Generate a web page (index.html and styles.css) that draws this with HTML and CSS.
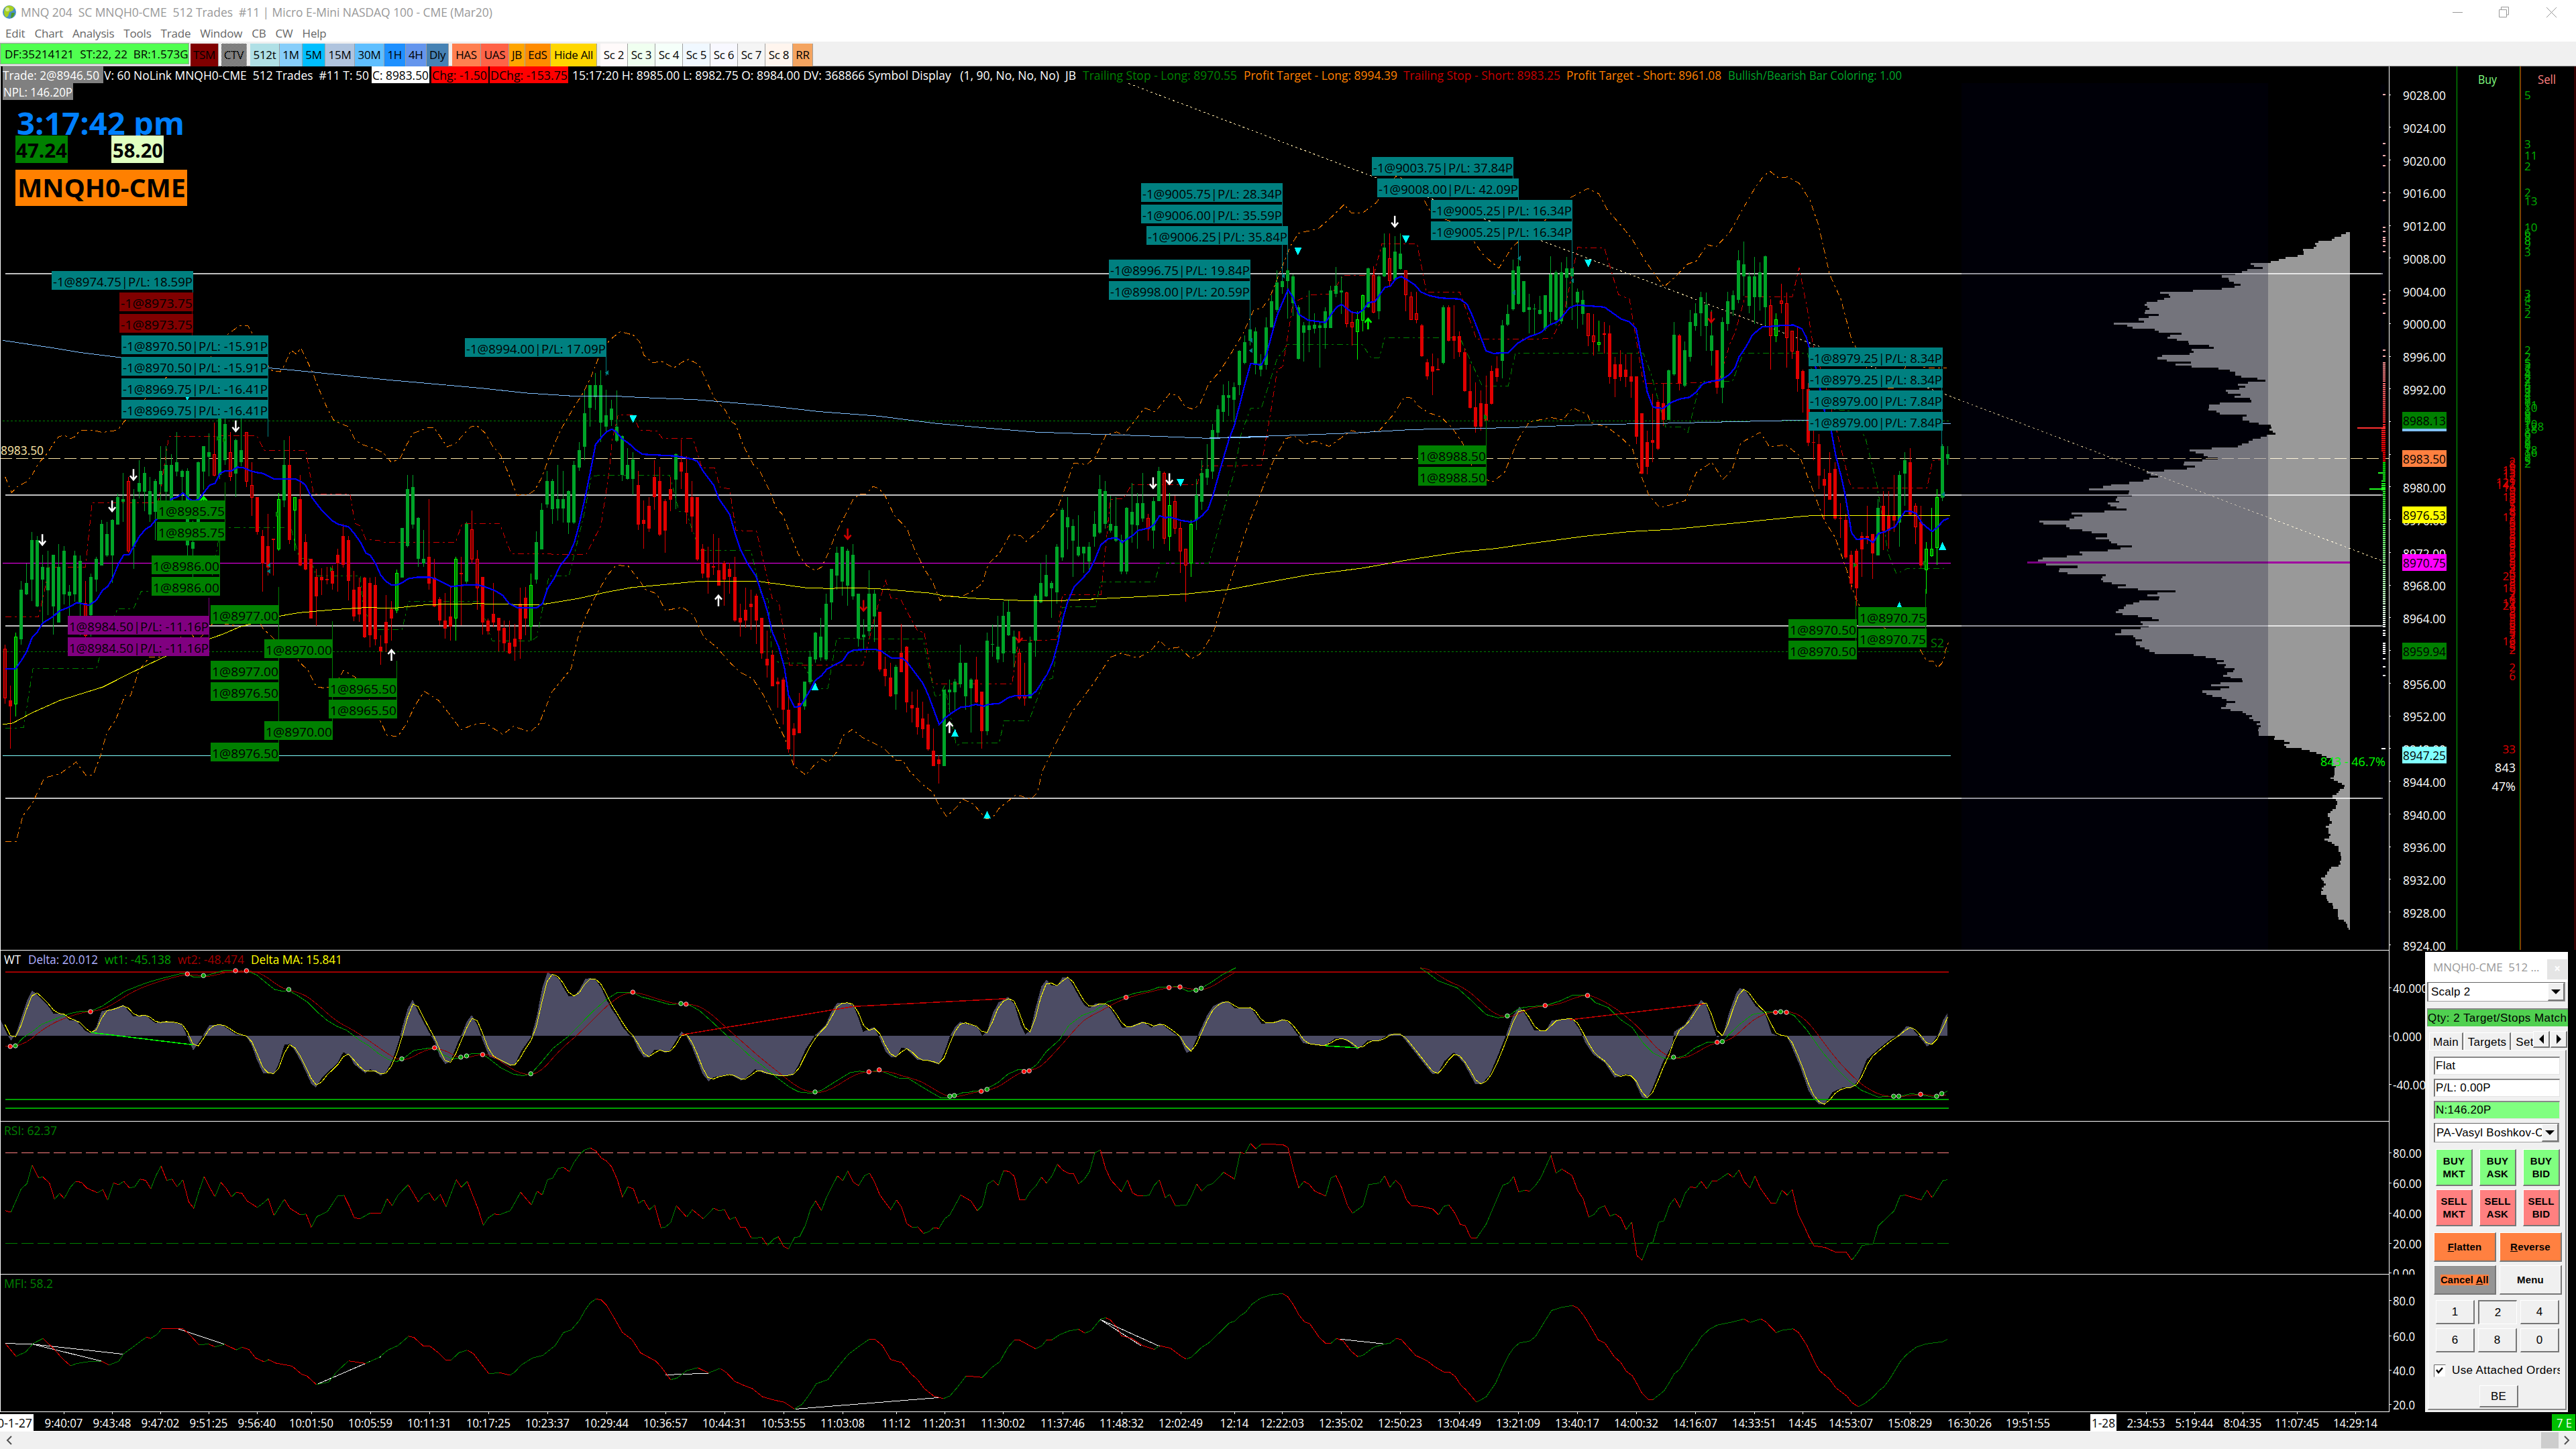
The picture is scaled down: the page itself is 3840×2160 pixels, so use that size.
FILE: index.html
```html
<!DOCTYPE html>
<html lang="en">
<head>
    <meta charset="UTF-8">
    <title>MNQ 204 SC MNQH0-CME 512 Trades #11</title>
    <link rel="stylesheet" href="styles.css">
</head>
<body>
    <div class="window">
        <div class="titlebar">
            <svg class="globe" width="22" height="24" viewBox="0 0 22 24">
                <circle cx="11" cy="12" r="10" fill="#4a90c8"/>
                <path d="M6 4c5-3 10-1 12 2l-2 4-5 2-2 6-3 2c-4-4-4-12 0-16z" fill="#a8d020"/>
                <path d="M14 13l5 0c-1 5-4 8-6 8z" fill="#4c9a28"/>
                <circle cx="8" cy="8" r="3" fill="#fff" opacity=".5"/>
            </svg>
            <span class="title">MNQ 204&nbsp; SC MNQH0-CME&nbsp; 512 Trades&nbsp; #11 | Micro E-Mini NASDAQ 100 - CME (Mar20)</span>
            <svg class="controls" width="160" height="24" viewBox="0 0 160 24" fill="none" stroke="#999">
                <path d="M3 12.500h15"/>
                <path d="M72.500 8.500h11v11h-11zM75.500 8v-3.500h11v11.500h-3"/>
                <path d="M143 5l15 15M158 5l-15 15"/>
            </svg>
        </div>
        <div class="menubar">
            <span>Edit</span><span>Chart</span><span>Analysis</span><span>Tools</span><span>Trade</span><span>Window</span><span>CB</span><span>CW</span><span>Help</span>
        </div>
        <div class="toolbar">
            <div class="status">DF:35214121&nbsp; ST:22, 22&nbsp; BR:1.573G</div>
            <div class="tool maroon w42">TSM</div>
            <div class="tool checker w38">CTV</div>
            <div class="group">
                <div class="tool powder w44">512t</div><div class="tool sky w34">1M</div><div class="tool deepsky w34">5M</div><div class="tool steel-light w44">15M</div><div class="tool sky2 w44">30M</div><div class="tool dodger w32">1H</div><div class="tool cornflower w32">4H</div><div class="tool steel w33">Dly</div>
            </div>
            <div class="group">
                <div class="tool coral w43">HAS</div><div class="tool tomato w42">UAS</div><div class="tool orange w24">JB</div><div class="tool dark-orange w38">EdS</div><div class="tool gold w69">Hide All</div>
            </div>
            <div class="group">
                <div class="tool snow w41">Sc 2</div><div class="tool honeydew w41">Sc 3</div><div class="tool mint w41">Sc 4</div><div class="tool alice w41">Sc 5</div><div class="tool ghost w41">Sc 6</div><div class="tool smoke w41">Sc 7</div><div class="tool shell w41">Sc 8</div><div class="tool sandy w30">RR</div>
            </div>
        </div>
        <svg id="chart" width="3840" height="2035" viewBox="0 99 3840 2035"></svg>
        <div class="scrollbar">
            <svg width="12" height="16" viewBox="0 0 12 16" fill="none" stroke="#505050" stroke-width="2"><path d="M9 2L3 8l6 6"/></svg>
            <div class="thumb"></div>
            <svg width="12" height="16" viewBox="0 0 12 16" fill="none" stroke="#505050" stroke-width="2"><path d="M3 2l6 6-6 6"/></svg>
        </div>
    </div>

    <div class="trade-window">
        <div class="tw-title"><span>MNQH0-CME&nbsp; 512 ...</span><b>×</b></div>
        <div class="combo"><span>Scalp 2</span><i></i></div>
        <div class="qty">Qty: 2 Target/Stops Match</div>
        <div class="tabs"><span class="tab">Main</span><span class="tab">Targets</span><span class="tab cut">Set</span><i class="spin left"></i><i class="spin right"></i></div>
        <div class="page">
            <div class="field">Flat</div>
            <div class="field">P/L: 0.00P</div>
            <div class="field profit">N:146.20P</div>
            <div class="combo account"><span>PA-Vasyl Boshkov-C</span><i></i></div>
            <div class="orders">
                <button class="buy">BUY<br>MKT</button><button class="buy">BUY<br>ASK</button><button class="buy">BUY<br>BID</button>
                <button class="sell">SELL<br>MKT</button><button class="sell">SELL<br>ASK</button><button class="sell">SELL<br>BID</button>
            </div>
            <div class="actions">
                <button class="hot"><u>F</u>latten</button><button class="hot"><u>R</u>everse</button>
                <button class="cancel"><span>Cancel <u>A</u>ll</span></button><button>Menu</button>
            </div>
            <div class="sizes">
                <button>1</button><button class="pressed">2</button><button>4</button>
                <button>6</button><button>8</button><button>0</button>
            </div>
            <div class="attach"><svg width="18" height="19" viewBox="0 0 18 19"><rect x="1" y="1" width="16" height="17" fill="#fff"/><path d="M.500 18.500V.500h17" fill="none" stroke="#666"/><path d="M4 8l3 4 6-7" fill="none" stroke="#000" stroke-width="2.500"/></svg><span>Use Attached Orders</span></div>
            <button class="be">BE</button>
        </div>
    </div>
    <script src="script.js"></script>
</body>
</html>
```
FILE: styles.css
```css
* {
    box-sizing: border-box;
}

body {
    margin: 0;
    width: 3840px;
    height: 2160px;
    overflow: hidden;
    background: #fff;
    font-family: "Open Sans", "Noto Sans", sans-serif;
    font-size: 17px;
    color: #000;
}

.window {
    display: flex;
    flex-direction: column;
    height: 2160px;
}

/* title bar and menu */
.titlebar {
    display: flex;
    align-items: center;
    height: 35px;
    padding: 0 27px 0 3px;
    color: #999;
}

.title {
    margin-left: 6px;
    font-size: 17.5px;
    letter-spacing: -0.06px;
    white-space: nowrap;
}

.controls {
    margin-left: auto;
}

.menubar {
    display: flex;
    align-items: center;
    gap: 14px;
    height: 27px;
    padding: 1px 0 0 8px;
    color: #666;
    font-size: 17px;
    letter-spacing: -0.2px;
}

.toolbar {
    display: flex;
    height: 37px;
    padding-top: 2px;
    background: #f0f0f0;
    border-bottom: 1px solid #a0a0a0;
    gap: 4px;
}

.status {
    width: 282px;
    height: 32px;
    padding-left: 6px;
    margin-right: -2px;
    border: 1px solid #a0a0a0;
    background: #50ff50;
    line-height: 32px;
    white-space: nowrap;
    overflow: hidden;
}

.group {
    display: flex;
    margin-left: 1px;
}

.tool {
    height: 34px;
    margin-top: 1px;
    border-right: 1px solid #a0a0a0;
    text-align: center;
    line-height: 34px;
    white-space: nowrap;
    overflow: hidden;
    letter-spacing: -0.3px;
}

.w24 { width: 24px; }
.w30 { width: 30px; }
.w32 { width: 31.5px; }
.w33 { width: 33px; }
.w34 { width: 34px; }
.w38 { width: 38px; }
.w41 { width: 41px; }
.w42 { width: 42px; }
.w43 { width: 43px; }
.w44 { width: 44px; }
.w69 { width: 69px; }

.maroon { background: #800000; }
.checker { background: repeating-conic-gradient(#000 0 25%, #fff 0 50%) 0 0 / 2px 2px; }
.powder { background: #b0e0e6; }
.sky { background: #87cefa; }
.deepsky { background: #00bfff; }
.steel-light { background: #b0c4de; }
.sky2 { background: #5fbfff; }
.dodger { background: #1e90ff; }
.cornflower { background: #6495ed; }
.steel { background: #4682b4; }
.coral { background: #ff7f50; }
.tomato { background: #ff6347; }
.orange { background: #ffa500; }
.dark-orange { background: #ff8c00; }
.gold { background: #ffd700; }
.snow { background: #fffafa; }
.honeydew { background: #f0fff0; }
.mint { background: #f5fffa; }
.alice { background: #f0f8ff; }
.ghost { background: #f8f8ff; }
.smoke { background: #f5f5f5; }
.shell { background: #fff5ee; }
.sandy { background: #f4a460; }

#chart {
    display: block;
    flex: none;
    background: #000;
    font-family: "Open Sans", "Noto Sans", sans-serif;
    shape-rendering: crispEdges;
}

.scrollbar {
    display: flex;
    align-items: center;
    height: 26px;
    padding: 0 8px;
    background: #f0f0f0;
}

.thumb {
    width: 26px;
    height: 24px;
    margin: 0 6px 0 auto;
    background: #cdcdcd;
}

/* floating trade window */
.trade-window {
    position: absolute;
    left: 3615px;
    top: 1419px;
    width: 213px;
    height: 686px;
    background: #f0f0f0;
    font-family: "Liberation Sans", Arial, sans-serif;
    font-size: 17px;
    letter-spacing: 0.25px;
    overflow: hidden;
}

.tw-title {
    display: flex;
    align-items: center;
    justify-content: space-between;
    height: 45px;
    padding: 0 1px 0 12px;
    background: #fff;
    color: #999;
    font-family: "Open Sans", sans-serif;
    font-size: 17px;
    letter-spacing: -0.1px;
    white-space: nowrap;
}

.tw-title b {
    width: 30px;
    height: 30px;
    margin-top: 6px;
    background: #e5e5e5;
    color: #fff;
    text-align: center;
    line-height: 28px;
}

.combo {
    display: flex;
    align-items: center;
    justify-content: space-between;
    width: 206px;
    height: 29px;
    margin-left: 3px;
    padding-left: 4px;
    background: #fff;
    border: 1px solid #a0a0a0;
    border-top-color: #666;
    border-left: 2px solid #777;
    white-space: nowrap;
}

.combo span {
    flex: 1;
    overflow: hidden;
}

.combo i {
    display: flex;
    flex: none;
    align-items: center;
    justify-content: center;
    width: 25px;
    height: 27px;
    background: #f0f0f0;
    border: 1px solid #fff;
    border-right: 2px solid #777;
    border-bottom: 2px solid #777;
}

.combo i::after {
    content: "";
    border: 7px solid transparent;
    border-top-color: #000;
    border-bottom: 0;
}

.qty {
    height: 27px;
    margin: 10px 0 0 3px;
    border-top: 2px solid #888;
    border-left: 1px solid #888;
    background: #50d050;
    line-height: 25px;
    white-space: nowrap;
    letter-spacing: 0.45px;
}

.tabs {
    display: flex;
    height: 26px;
    margin: 9px 0 0 6px;
    line-height: 27px;
}

.tab {
    border-top: 1px solid #fff;
    border-left: 1px solid #fff;
    border-right: 2px solid #777;
    padding: 0 5px;
    margin-right: 1px;
}

.cut {
    flex: 1;
    width: 0;
    border-right: 0;
    overflow: hidden;
    padding-right: 0;
}

.spin {
    display: flex;
    flex: none;
    align-items: center;
    justify-content: center;
    width: 25px;
    height: 25px;
    margin: -2px 1px 0 0;
    border: 1px solid #fff;
    border-right: 2px solid #777;
    border-bottom: 2px solid #777;
}

.left {
    margin-left: -1px;
}

.spin::after {
    content: "";
    border: 7px solid transparent;
}

.left::after {
    border-right: 7px solid #000;
    border-left: 0;
}

.right::after {
    border-left: 7px solid #000;
    border-right: 0;
}

.page {
    height: 537px;
    width: 207px;
    margin-left: 4px;
    padding: 9px 0 0 8px;
    border: 1px solid #fff;
    border-right: 2px solid #888;
    border-bottom: 2px solid #888;
}

.field {
    width: 188px;
    height: 27px;
    margin-bottom: 6px;
    padding-left: 1px;
    background: #fff;
    border: 1px solid #e3e3e3;
    border-top: 2px solid #888;
    border-left: 2px solid #777;
    line-height: 24px;
}

.profit {
    background: #80ff80;
}

.account {
    width: 187px;
    margin-left: 0;
    padding-left: 2px;
}

.page button {
    padding: 0;
    border: 1px solid #fff;
    border-right: 2px solid #777;
    border-bottom: 2px solid #777;
    background: #f0f0f0;
    font: bold 15px/19px "Liberation Sans", Arial, sans-serif;
    letter-spacing: 0.2px;
    color: #000;
}

.orders {
    display: grid;
    grid-template-columns: 55px 55px 55px;
    gap: 5px 10px;
    margin: 10px 0 0 3px;
}

.page .orders button {
    height: 55px;
}

.page .buy {
    background: #80ff80;
}

.page .sell {
    background: #ff8080;
}

.actions {
    display: grid;
    grid-template-columns: 93px 93px;
    gap: 5px;
    margin-top: 9px;
}

.page .actions button {
    height: 44px;
}

.page .hot {
    background: #ff8040;
}

.page .cancel {
    background: #959595;
}

.cancel span {
    background: #ff8040;
    font-size: 14.5px;
}

.sizes {
    display: grid;
    grid-template-columns: 58px 58px 58px;
    gap: 6px 5px;
    margin: 8px 0 0 3px;
}

.page .sizes button,
.page .be {
    height: 36px;
    font-weight: normal;
    font-size: 17px;
}

.page .sizes .pressed {
    border: 1px solid #fff;
    border-top: 2px solid #777;
    border-left: 2px solid #777;
}

.attach {
    display: flex;
    align-items: center;
    gap: 9px;
    width: 188px;
    height: 20px;
    margin-top: 17px;
    overflow: hidden;
    white-space: nowrap;
    letter-spacing: 0.4px;
}

.attach svg {
    flex: none;
}

.page .be {
    display: block;
    width: 58px;
    height: 33px;
    margin: 12px 0 0 68px;
}

/* chart drawing */
.ma { fill: none; stroke-width: 2.2; }
.thin { fill: none; stroke-width: 1; }
.dashdot { fill: none; stroke-width: 1; stroke-dasharray: 9 5 3 5; }
.profile { fill: #fff; fill-opacity: 0.6; }
.shade { fill: #000021; fill-opacity: 0.24; }
.delta { fill: #4c4c64; }
.dot { shape-rendering: auto; }
```
FILE: script.js
```js
// recorded segments: each one has an origin and a scale
const views = {
    a: [0, 380, 1.568, 2.0103],
    b: [960, 440, 1.568, 2.0103],
    c: [1600, 200, 1.2062, 1.9122],
    d: [2500, 500, 3, 3],
    e: [2900, 0, 1.6681, 2.24],
    f: [2900, 680, 1.6681, 2.1189],
    g: [0, 1400, 1.0453, 2.0632],
    h: [1450, 1400, 1.0453, 2.0632]
};

let out = '';
const X = (v, x) => views[v][0] + x / views[v][2];
const Y = (v, y) => views[v][1] + y / views[v][3];

function points(parts) {
    const list = [];
    for (const v in parts) {
        parts[v].trim().split(/\s+/).forEach(p => {
            const [x, y] = p.split(',').map(Number);
            list.push([X(v, x), Y(v, y)]);
        });
    }
    return list;
}

const str = pts => pts.map(p => p[0].toFixed(1) + ',' + p[1].toFixed(1)).join(' ');
const line = (pts, cls, color, width) => {
    out += `<polyline class="${cls}" points="${str(pts)}" stroke="${color}"${width ? ` style="stroke-width:${width}"` : ''} fill="none"/>`;
};
const hline = (y, x1, x2, color, width, dash) => {
    out += `<path d="M${x1} ${y}H${x2}" stroke="${color}" stroke-width="${width || 1}"${dash ? ` stroke-dasharray="${dash}"` : ''}/>`;
};
const rect = (x, y, w, h, fill, extra) => {
    out += `<rect x="${x}" y="${y}" width="${w}" height="${h}" fill="${fill}" ${extra || ''}/>`;
};
// x, vertical centre, text width
const text = (s, x, yc, w, color, size, extra) => {
    size = size || 18;
    out += `<text xml:space="preserve" x="${x}" y="${(yc + size * 0.34).toFixed(1)}" fill="${color}" font-size="${size}"${w ? ` textLength="${w}" lengthAdjust="spacingAndGlyphs"` : ''} ${extra || ''}>${s}</text>`;
};

// high, body top, body bottom, low, kind
const bars = [
['a', 0, `1168,1180,1327,1344,R 1290,1334,1352,1480,r 1132,1145,1345,1383,G 977,1003,1152,1167,g 925,983,1017,1019,g 830,854,972,1038,g 842,854,1053,1056,g 899,935,972,1103,g 886,937,1005,1080,g 898,899,1053,1138,g
866,935,1102,1102,g 873,887,1018,1048,g 989,1009,1022,1090,g 887,901,1018,1040,g 901,917,1042,1140,g 976,1045,1140,1145,R 954,965,1080,1144,g 905,911,972,1009,g 794,806,930,930,g 800,836,900,904,g
792,794,900,983,g 715,726,808,808,g 653,732,740,800,g 665,678,888,893,R 702,732,875,941,g 615,683,710,730,g 635,653,710,768,g 665,708,777,800,g 672,677,770,854,g 573,647,688,735,g
573,629,710,740,g 597,629,735,750,g 530,621,650,664,g 644,647,666,735,g 640,647,870,900,g 795,860,880,965,g 620,621,830,830,g 572,573,650,704,g 535,591,605,664,g 502,597,660,664,R
448,490,660,672,g 448,507,616,630,g 530,591,665,678,R 550,555,655,726,g 480,585,622,634,g 530,532,678,695,R 621,690,726,781,R 725,726,830,838,r 824,842,924,1009,r 776,873,936,960,r
850,851,855,960,r 714,732,881,887,G 555,629,735,755,g 543,629,855,866,r 725,726,765,887,G 660,732,930,932,r 836,860,942,944,r 911,911,1089,1089,r 940,965,1023,1112,r 938,964,975,1020,r
935,970,974,986,r 930,947,985,1003,r 880,899,924,1009,r 806,842,929,936,r 842,854,977,1035,r 946,1003,1083,1098,r 966,996,1077,1100,r 965,966,1145,1147,r 966,983,1139,1175,r 965,989,1152,1170,r
1139,1173,1188,1228,r 1020,1100,1163,1190,r 1038,1062,1090,1155,r 942,954,1064,1074,G 818,818,966,966,g 660,702,873,877,g 660,696,808,820,g 786,788,911,935,g 825,911,924,935,g 732,905,984,1003,r
911,966,1053,1056,r 1026,1032,1096,1110,r 1014,1096,1120,1150,r 990,1083,1114,1155,r 905,911,1088,1155,G 905,953,956,1110,r 801,806,978,984,g 765,824,911,924,R 884,911,998,1064,R 965,965,1102,1137,r
1090,1096,1127,1137,r 983,1075,1102,1116,r 1088,1088,1126,1188,r 1095,1118,1163,1188,r 1095,1161,1194,1196,r 1105,1149,1173,1216,r 997,1046,1151,1210,r 996,1027,1089,1140,r 954,990,1112,1155,G 828,860,973,985,g
743,764,882,882,g 647,677,748,758,g 671,677,762,806,g 629,732,760,795,g 647,732,760,802,g 705,708,802,836,g 617,629,802,806,g 561,585,637,648,g 405,474,575,615,g 390,390,459,515,g
353,390,426,465,g 345,390,502,560,g 404,481,515,530,g 435,461,495,512,g 405,514,557,560,g 540,543,660,678,g 579,629,672,674,g 590,614,672,720,g 648,690,808,824,r 736,794,806,880,r`],
['b', 120, `605,631,700,710,r 495,545,606,643,r 515,557,717,722,r 611,617,706,772,r 545,581,613,648,r 475,476,552,641,g 433,501,529,581,r 483,533,651,685,r 557,605,663,709,r 605,605,792,796,r
745,759,834,849,r 753,802,846,895,r 716,813,817,838,r 728,825,870,870,r 796,802,852,930,r 802,820,845,895,r 784,844,975,978,r 925,967,981,1023,r 876,943,975,997,r 883,925,934,1004,r
895,901,975,1046,r 966,967,1073,1090,r 1005,1090,1109,1145,r 1064,1077,1171,1172,r 1145,1158,1166,1236,r 1145,1152,1243,1286,r 1205,1242,1361,1371,r 1282,1299,1319,1408,r 1192,1223,1313,1313,r 1158,1158,1232,1242,g
1065,1084,1159,1165,g 1010,1011,1092,1102,g 967,1023,1086,1096,g 895,925,1092,1096,g 820,820,921,973,g 753,772,840,882,g 753,754,858,900,g 760,766,870,930,g 745,778,902,912,g 895,895,1030,1054,g
970,1017,1025,1062,g 825,895,1007,1022,g 883,895,963,1040,g 949,949,1122,1128,r 1084,1120,1141,1171,r 1102,1146,1201,1205,r 1108,1114,1196,1242,g 985,1071,1130,1130,r 1052,1053,1220,1250,r 1188,1229,1239,1281,r
1182,1236,1295,1316,r 1218,1268,1301,1326,r 1255,1287,1361,1365,r 1299,1365,1411,1411,r 1379,1391,1405,1463,r 1182,1182,1411,1411,g 1152,1182,1190,1250,g 1150,1158,1190,1243,g 1047,1102,1166,1176,g 1102,1102,1202,1242,g
1147,1152,1178,1310,g 1084,1152,1220,1222,r 1188,1188,1307,1358,r 1011,1035,1307,1318,g 986,1046,1048,1084,g 961,1053,1092,1102,g 919,961,1074,1100,g 913,949,1019,1021,g 1005,1023,1073,1115,g 1060,1072,1207,1212,R
1102,1202,1208,1230,R 1023,1041,1208,1208,g 895,901,1036,1084,g 803,862,920,922,g 778,838,903,905,g 856,862,878,967,g 745,754,891,924,g 638,643,786,795,g 605,666,695,762,g 672,692,735,844,g
660,754,780,783,g 754,754,774,832,g 740,754,797,824,g 647,685,724,754,g 538,581,712,715,g 557,587,685,700,g 600,685,706,712,g 605,692,735,740,g 717,734,829,837,g 636,637,828,837,g
563,649,688,742,g 592,623,689,760,g 533,623,669,680,g 655,668,700,735,R 605,617,706,760,g 515,527,618,618,g 528,534,729,745,R 592,631,723,766,G 600,618,699,716,R 680,699,767,832,R
760,760,808,919,R 674,686,803,844,G 551,599,673,704,g 495,533,619,643,g 446,521,546,568,g 386,404,528,550,g 330,342,412,429,g 268,300,350,380,g 257,300,307,361,g 262,275,314,380,g
165,166,270,300,g 121,140,204,207,g 70,103,136,150,g 96,109,208,238,g 176,205,222,243,g 66,96,208,224,g`],
['c', 236, `458,476,550,550,g 388,423,500,506,g 354,418,436,455,g 370,388,418,526,g 400,405,482,518,g 488,493,641,643,g 535,545,566,648,g 446,545,559,622,g 511,543,555,568,g 535,545,553,665,g
493,505,553,612,g 433,446,552,552,g 378,433,456,465,g 406,445,452,512,g 450,452,541,550,R 505,536,549,602,R 505,529,563,642,G 457,459,530,562,G 381,382,494,495,g 376,403,507,510,R
402,405,505,528,g 282,323,405,408,g 283,354,418,436,R 290,335,415,418,g 282,340,384,386,g 388,389,458,505,R 450,463,529,530,R 450,511,529,540,R 541,545,632,634,r 640,650,690,700,r
625,662,676,744,r 638,669,672,673,r 488,493,652,655,g 488,494,588,590,r 488,575,588,640,r 562,575,622,635,r 610,621,732,735,r 655,732,780,782,r 708,778,833,850,r 730,767,833,845,r
688,768,816,820,r 660,674,769,770,r 632,668,692,705,r 530,545,646,695,g 486,512,542,546,g 358,389,500,502,g 340,376,484,486,g 418,418,507,508,g 455,493,501,568,g 483,498,500,570,g
460,500,513,515,g 458,458,555,560,g 348,400,507,542,g 388,394,530,545,g 365,393,534,541,g 350,382,410,496,g 326,382,406,530,g 440,450,479,555,g 446,473,512,543,g 511,511,575,604,R
512,575,591,630,R 532,593,599,620,G 535,568,570,625,R 545,568,692,712,r 635,655,698,750,r 615,655,692,704,r 628,672,692,720,r 625,690,706,752,r 690,690,862,884,r 795,795,968,970,r
845,878,949,970,r 740,872,880,935,r 758,763,896,900,r 710,767,815,832,r 672,673,815,815,g 535,571,685,688,g 570,574,711,730,r 590,615,717,720,g 500,535,635,648,g 482,511,546,560,g
450,464,511,575,g 452,486,546,618,g 500,574,617,660,g 615,616,722,740,r 522,535,722,766,g 450,476,541,560,g 445,458,500,518,g 330,360,472,482,g 306,370,406,460,g 394,405,490,510,g
350,405,464,542,g 365,394,464,503,g 346,348,494,545,g 470,488,575,672,R 510,529,575,592,G 427,476,482,510,R 452,482,580,665,R 562,562,618,640,R 548,618,697,735,r 672,674,727,794,r`],
['d', 336, `213,240,480,495,r 426,477,479,558,r 440,486,627,687,r 597,642,672,825,r 522,615,735,735,r 567,597,819,825,r 750,816,818,906,r 798,825,993,998,r 963,981,1110,1137,r 954,963,1131,1209,r
879,897,957,1080,r 762,897,906,933,r 888,888,975,1089,r 732,771,984,984,g 696,762,873,960,r 696,807,873,954,r 624,807,828,879,r 606,624,837,945,g 522,558,618,762,g 504,567,801,807,r
750,762,855,933,R 762,834,1029,1041,r 924,954,1047,1155,G 771,954,984,990,G 687,723,948,1026,G 486,495,726,741,g 495,531,552,579,g`]
];

const kinds = {
    g: ['#00a428', '#00a428'],
    r: ['#e00000', '#e00000'],
    G: ['#008000', '#00ff00'],
    R: ['#800000', '#ff0000']
};

// ---- price levels
[408, 738, 933, 1190].forEach(y => hline(y, 8, 3552, '#c0c0c0', 2));
hline(627.5, 4, 2905, '#008000', 1, '3 3');
hline(971.5, 4, 2905, '#008000', 1, '3 3');
hline(683.5, 0, 3561, '#ffe8a8', 1, '18 6');
hline(839.5, 4, 2908, '#ff00ff');
hline(1126.5, 4, 2908, '#80ffff');
out += '<path d="M1682.500 124.500L3551 836" stroke="#ffe8a8" stroke-dasharray="3 4"/>';

// ---- volatility bands
line(points({
    a: '12,665 27,712 40,695 62,680 75,660 90,625 100,610 112,593 125,565 137,545 150,540 165,550 175,545 187,525 215,525 240,532 275,525 290,500 340,430 390,365 440,330 490,310 530,240 560,212 580,213 590,235 605,255 620,310 632,345 655,350 665,330 680,285 693,298 703,278 715,310 730,350 745,400 765,460 780,495 795,505 815,515 830,555 850,570 870,578 895,592 915,622 935,610 950,570 965,535 1000,518 1015,518 1045,575 1065,565 1080,543 1100,515 1115,512 1135,535 1150,570 1170,600 1190,660 1208,720 1235,718 1250,705 1265,670 1290,585 1310,525 1340,460 1360,420 1380,370 1400,305 1425,255 1450,230 1480,240 1495,260 1505,300',
    b: '20,203 40,198 70,218 90,200 105,192 128,208 145,255 165,310 190,345 205,380 215,388 230,445 255,507 270,525 295,590 308,635 325,660 340,710 360,775 380,810 400,825 415,815 430,775 450,710 470,660 490,610 505,597 520,595 535,573 550,580 565,605 585,660 615,700 630,755 655,820 675,860 692,915 705,900 740,905 770,885 790,865 805,805 830,775 855,718 880,720 893,738 930,700 950,665 965,645 985,575 1005,503 1035,508 1055,485 1080,418 1105,410 1120,420 1145,380 1170,338 1195,350 1210,325 1230,293 1250,305 1265,335 1285,342 1300,325 1320,265 1345,230 1370,180 1400,115 1425,45 1445,38',
    c: '352,470 370,400 390,320 405,282 440,270 465,235 487,200 500,225 520,225 545,195 560,160 580,120 600,130 625,170 645,230 700,260 720,305 735,340 750,362 765,382 790,320 860,230 895,180 925,155 945,170 960,215 990,270 1005,300 1030,365 1062,435 1080,410 1105,370 1120,362 1140,315 1155,322 1180,280 1205,210 1225,155 1240,122 1252,105 1268,125 1285,122 1305,140 1325,190 1340,260 1360,400 1380,470 1400,590 1420,640 1440,720 1480,725 1500,650 1530,665 1570,667'
}), 'dashdot', '#ff8000');
line(points({
    a: '110,1565 140,1555 178,1520 200,1558 218,1558 235,1500 250,1430 270,1395 292,1320 305,1322 325,1245 350,1205 380,1205 440,1120 460,1160 500,1100 545,1110 585,1048 615,1120 640,1150 665,1158 700,1220 720,1245 740,1295 762,1298 785,1285 803,1245 830,1265 860,1325 890,1400 905,1440 930,1443 950,1405 970,1350 992,1308 1025,1335 1050,1375 1078,1423 1105,1408 1135,1403 1175,1437 1200,1413 1240,1430 1260,1405 1290,1310 1335,1240 1350,1150 1370,1080 1395,1015 1420,960 1440,930 1468,932 1500,985',
    b: '0,880 30,895 50,945 90,935 115,958 140,1025 170,1055 200,1100 225,1130 255,1150 280,1200 305,1265 330,1330 350,1410 378,1438 400,1405 415,1390 430,1400 450,1370 465,1320 487,1301 510,1325 560,1357 590,1395 605,1395 620,1425 650,1465 675,1490 690,1530 707,1562 730,1535 745,1510 770,1525 800,1570 815,1565 830,1538 870,1497 905,1510 920,1490 930,1430 960,1350 1000,1250 1050,1165 1090,1085 1115,1073 1155,1087 1185,1065 1205,1035 1225,1060 1250,1055 1280,1090 1300,1075 1330,1015 1350,930 1375,840 1400,730 1430,630 1470,500 1500,430 1520,422 1545,447',
    c: '434,875 460,890 500,845 520,852 550,845 575,800 595,750 610,752 620,775 640,795 660,805 680,835 700,880 720,960 740,985 755,990 775,965 800,870 820,820 860,808 880,815 898,780 925,800 930,822 960,835 985,865 1005,895 1020,970 1035,1030 1055,1065 1100,1045 1120,965 1148,935 1168,985 1185,955 1200,880 1235,850 1252,892 1280,885 1305,915 1325,995 1350,1100 1370,1150 1390,1240',
    d: '800,1180 820,1215 930,1310 1060,1360 1090,1410 1115,1455 1145,1457 1165,1487 1185,1465 1195,1440 1200,1410 1214,1370'
}), 'dashdot', '#ff8000');
line([[8, 1254], [24, 1255], [34, 1216], [48, 1198], [66, 1160]], 'dashdot', '#ff8000');

// ---- trailing stops
line(points({
    a: '12,1085 90,1085 105,1000 115,935 200,936 215,743 370,743 395,544 600,542 618,586 715,586 733,717 818,717 830,805 842,812 855,853 885,855 895,861 1065,861 1080,806 1168,806 1195,895 1370,898 1405,810 1425,640 1430,560 1445,478 1480,480 1495,525',
    b: '30,407 43,429 115,430 135,517 165,518 178,577 200,580 215,705 263,707 285,830 300,910 315,920 340,1108 512,1108 540,960 565,855 577,908 600,912 640,1008 655,1010 675,1165 860,1166 875,1034 965,1033 978,898 1068,897 1090,612 1120,610 1140,568 1293,567 1305,512 1443,510 1465,350 1480,225 1493,213 1510,80',
    c: '395,480 425,458 465,455 485,402 540,402 555,312 618,312 635,450 695,450 725,585 860,583 880,525 907,323 955,325 980,457 1000,470 1025,710 1160,709 1180,600 1190,565 1208,463 1293,463 1305,380 1320,500 1330,600 1350,700 1395,990 1400,1008 1535,1008 1545,930 1565,928'
}), 'dashdot', '#d00000');
line(points({
    a: '12,1418 55,1417 77,1240 225,1240 245,1150 275,1060 312,1060 330,1008 490,1008 510,860 525,817 680,817 700,910 725,911 740,962 842,962 850,1060 875,1123 940,1122 955,1038 1120,1038 1150,1156 1240,1158 1255,1145 1283,962 1330,962 1365,780 1382,665 1400,660 1500,660',
    b: '60,540 82,648 98,648 130,765 250,765 275,905 290,910 300,1095 325,1103 370,1103 405,1180 430,1178 450,1029 652,1030 680,1200 690,1203 703,1170 730,1350 745,1342 830,1342 842,1275 900,1275 935,1155 955,1148 978,935 1055,934 1068,860 1193,860 1207,803 1320,803 1380,530 1395,420 1418,338 1443,338 1480,190 1505,150',
    c: '385,600 520,600 535,637 550,637 560,580 695,580 735,717 782,717 795,624 1025,624 1040,690 1065,835 1095,835 1105,850 1125,720 1135,705 1185,705 1205,624 1320,624 1345,780 1400,790 1425,870 1445,1000 1465,1195 1480,1253 1500,1238 1565,1238'
}), 'dashdot', '#008000');

// ---- candles
bars.forEach(([v, start, data]) => {
    data.trim().split(/\s+/).forEach((row, n) => {
        const f = row.split(',');
        const [h, t, b, l] = f.slice(0, 4).map(y => Y(v, +y));
        const [fill, edge] = kinds[f[4]];
        const x = 7.5 + (start + n) * 8;
        out += `<path d="M${x} ${h.toFixed(1)}V${l.toFixed(1)}" stroke="${edge}"/>`;
        const bh = Math.max(1, b - t);
        if (fill === edge) {
            rect(x - 2.5, t.toFixed(1), 5, bh.toFixed(1), fill);
        } else {
            rect(x - 2, t.toFixed(1), 4, bh.toFixed(1), fill, `stroke="${edge}"`);
        }
    });
});

// ---- moving averages
line(points({
    a: '6,256 120,278 190,293 285,308 450,322 630,339 690,346 775,357 910,375 1000,385 1130,400 1230,414 1340,423 1450,424',
    b: '0,307 120,313 280,330 410,349 545,362 680,384 800,398 910,410 1040,416 1200,423 1320,429 1460,425',
    c: '245,866 400,858 500,852 610,842 780,837 950,827 1050,825 1200,819 1320,815',
    d: '800,385 1000,390 1224,394'
}), 'thin', '#80c0ff');
line(points({
    a: '6,1407 30,1403 75,1372 140,1335 240,1295 310,1250 380,1207 490,1150 520,1137 560,1115 650,1083 700,1072 780,1063 850,1057 925,1058 1000,1048 1120,1045 1180,1047 1260,1049 1350,1030 1420,1010 1480,996',
    b: '0,873 130,857 270,858 380,877 430,879 500,877 560,881 670,893 700,901 780,909 880,915 980,915 1070,909',
    c: '0,1328 140,1317 200,1311 280,1298 340,1280 420,1257 520,1237 600,1214 700,1190 760,1181 820,1167 920,1146 1000,1133 1080,1126 1200,1107 1300,1091 1330,1087 1577,1088'
}), 'thin', '#ffff00');
line(points({
    a: '12,1240 37,1240 50,1215 62,1190 75,1147 87,1130 100,1103 125,1083 137,1068 162,1055 180,1042 208,1050 225,1035 240,1005 252,993 263,970 277,925 290,898 302,898 325,845 340,822 352,813 363,795 375,785 400,732 415,725 428,713 440,730 452,737 465,733 478,710 490,690 502,685 514,655 525,648 540,648 555,636 570,638 585,647 600,652 615,655 640,671 690,671 705,680 715,692 728,725 750,762 775,795 790,807 805,812 815,815 830,838 842,860 855,893 865,900 878,925 890,960 902,978 915,989 928,989 940,982 955,970 975,966 1005,966 1020,972 1040,985 1055,994 1080,990 1115,988 1130,993 1155,1005 1175,1020 1190,1045 1210,1058 1255,1057 1268,1045 1280,1000 1295,970 1310,930 1330,898 1343,860 1355,800 1368,725 1380,650 1392,568 1405,548 1418,530 1430,522 1440,530 1453,550 1470,565 1485,583 1500,596',
    b: '0,477 75,482 112,491 125,498 137,525 163,570 175,610 200,657 212,710 225,760 240,800 262,843 275,892 288,945 300,1010 315,1055 328,1115 338,1200 352,1235 365,1232 375,1213 390,1180 400,1155 415,1140 428,1120 440,1112 465,1095 477,1072 490,1063 540,1061 555,1067 578,1087 603,1087 615,1100 628,1122 640,1143 652,1163 665,1200 678,1245 690,1287 703,1268 715,1256 728,1245 740,1235 760,1232 775,1226 795,1232 805,1226 830,1224 852,1206 865,1201 905,1199 917,1186 930,1160 942,1137 955,1100 968,1040 980,965 990,920 1005,875 1020,855 1040,828 1053,795 1068,748 1085,730 1105,727 1118,741 1130,730 1142,720 1155,705 1180,698 1192,688 1205,661 1218,667 1230,665 1255,675 1280,680 1292,673 1305,660 1318,642 1330,600 1343,540 1355,485 1368,430 1380,390 1393,325 1405,265 1418,205 1443,209 1455,178 1468,115 1480,60 1493,20',
    c: '386,443 395,465 405,513 422,530 453,537 463,515 473,494 482,485 500,507 512,511 522,500 530,480 542,478 550,460 560,437 570,433 580,412 590,406 602,417 615,431 625,450 640,460 660,467 695,470 708,485 718,520 730,568 742,618 755,625 782,623 800,595 820,577 840,566 855,545 870,535 882,515 892,495 905,487 940,491 955,493 970,510 985,527 1000,535 1012,555 1022,640 1032,735 1042,778 1060,782 1075,765 1090,755 1108,750 1120,735 1132,712 1145,705 1165,700 1180,685 1190,665 1197,635 1210,605 1220,575 1230,560 1240,548 1255,548 1275,545 1295,544 1310,555 1318,580',
    d: '590,50 620,145 640,240 660,340 690,430 710,540 735,635 750,705 765,790 780,883 802,912 850,908 877,927 900,886 930,878 950,866 975,856 1000,815 1020,787 1045,787 1070,797 1095,840 1140,877 1165,858 1190,828 1214,818'
}), 'ma', '#0000ff');

// ---- signals
function arrow(v, x, y, dir, color) {
    const cx = X(v, x), cy = Y(v, y), d = dir;
    out += `<path class="dot" d="M${cx} ${cy - 8 * d}V${cy + 7 * d}M${cx - 5} ${cy + 2 * d}L${cx} ${cy + 8 * d}L${cx + 5} ${cy + 2 * d}" fill="none" stroke="${color}" stroke-width="2.500"/>`;
}
function tri(v, x, y, dir) {
    const cx = X(v, x), cy = Y(v, y);
    out += `<path d="M${cx - 5.5} ${cy - 5.5 * dir}h11L${cx} ${cy + 6 * dir}z" fill="#00ffff"/>`;
}
[['a', 99, 853], ['a', 262, 752], ['a', 312, 658], ['a', 551, 512], ['b', 1190, 562], ['b', 1228, 550], ['c', 578, 248]].forEach(p => arrow(...p, 1, '#fff'));
[['a', 915, 1200], ['b', 174, 916], ['b', 714, 1296]].forEach(p => arrow(...p, -1, '#fff'));
[['b', 476, 715], ['b', 513, 930], ['b', 877, 1023], ['c', 1147, 521]].forEach(p => arrow(...p, 1, '#d00000'));
[['c', 530, 541], ['a', 476, 741]].forEach(p => arrow(...p, -1, '#00ff00'));
[['a', 438, 425], ['a', 1480, 492], ['b', 1254, 562], ['c', 404, 334], ['c', 598, 300], ['c', 926, 368]].forEach(p => tri(...p, 1));
[['b', 400, 1173], ['b', 727, 1312], ['b', 802, 1557], ['d', 1187, 942], ['d', 994, 1209]].forEach(p => tri(...p, -1));
// fill markers
[['a', 1419, 353], ['a', 629, 930], ['a', 629, 948], ['a', 453, 824], ['b', 1419, 135], ['b', 1419, 166], ['c', 378, 405], ['c', 802, 354], ['c', 898, 418], ['c', 792, 452], ['d', 1190, 711]].forEach(([v, x, y]) => {
    out += `<path d="M${X(v, x) - 3} ${Y(v, y)}l5 -4v8z" fill="#008080"/>`;
});
[['a', 509, 550], ['a', 523, 555], ['a', 648, 777], ['a', 774, 942], ['c', 741, 806], ['d', 795, 1027], ['d', 1107, 1019]].forEach(([v, x, y]) => {
    out += `<path d="M${X(v, x) + 3} ${Y(v, y)}l-5 -4v8z" fill="#008000"/>`;
});

// ---- leader lines from a fill label to its bar
[[287, 404, 460, '#008080'], [286.5, 464, 524, '#800000'], [399, 500, 651, '#008080'], [903, 504, 560, '#008080'], [335, 719, 800, '#008000'], [327, 800, 880, '#008000'], [415, 875, 1110, '#008000'], [495, 926, 1080, '#008000'], [591, 985, 1050, '#008000'], [311, 891, 950, '#800080'],
 [1911, 290, 418, '#008080'], [1919, 337, 400, '#008080'], [1863, 400, 505, '#008080'], [2255, 240, 270, '#008080'], [2263, 270, 385, '#008080'], [2343, 300, 420, '#008080'], [2215, 620, 700, '#008000'], [2766, 896, 960, '#008000'], [2870.5, 878, 940, '#008000'], [2894.5, 518, 670, '#008080']
].forEach(([x, y1, y2, c]) => { out += `<path d="M${x} ${y1}V${y2}" stroke="${c}"/>`; });

// ---- fill labels
const T = '#008080', GR = '#008000', M = '#800000', P = '#800080';
[['-1@8974.75|P/L: 18.59P', 77, 404, 211, T], ['-1@8973.75', 178, 436, 110, M], ['-1@8973.75', 178, 468, 110, M],
 ['-1@8970.50|P/L: -15.91P', 181, 500, 219, T], ['-1@8970.50|P/L: -15.91P', 181, 532, 219, T], ['-1@8969.75|P/L: -16.41P', 181, 564, 219, T], ['-1@8969.75|P/L: -16.41P', 181, 596, 219, T],
 ['-1@8994.00|P/L: 17.09P', 693, 504, 211, T],
 ['1@8985.75', 234, 746, 102, GR], ['1@8985.75', 234, 778, 102, GR], ['1@8986.00', 226, 828, 102, GR], ['1@8986.00', 226, 860, 102, GR],
 ['1@8977.00', 314, 902, 102, GR], ['1@8977.00', 314, 985, 102, GR], ['1@8976.50', 314, 1017, 102, GR], ['1@8976.50', 314, 1107, 102, GR],
 ['1@8970.00', 394, 953, 102, GR], ['1@8970.00', 394, 1075, 102, GR], ['1@8965.50', 490, 1011, 102, GR], ['1@8965.50', 490, 1043, 102, GR],
 ['1@8984.50|P/L: -11.16P', 101, 918, 211, P], ['1@8984.50|P/L: -11.16P', 101, 950, 211, P],
 ['-1@9005.75|P/L: 28.34P', 1701, 273, 211, T], ['-1@9006.00|P/L: 35.59P', 1701, 305, 211, T], ['-1@9006.25|P/L: 35.84P', 1709, 337, 211, T],
 ['-1@8996.75|P/L: 19.84P', 1653, 387, 211, T], ['-1@8998.00|P/L: 20.59P', 1653, 419, 211, T],
 ['-1@9003.75|P/L: 37.84P', 2045, 234, 211, T], ['-1@9008.00|P/L: 42.09P', 2053, 266, 211, T], ['-1@9005.25|P/L: 16.34P', 2133, 298, 211, T], ['-1@9005.25|P/L: 16.34P', 2133, 330, 211, T],
 ['1@8988.50', 2114, 664, 102, GR], ['1@8988.50', 2114, 696, 102, GR],
 ['-1@8979.25|P/L: 8.34P', 2696, 518, 200, T], ['-1@8979.25|P/L: 8.34P', 2696, 550, 200, T], ['-1@8979.00|P/L: 7.84P', 2696, 582, 200, T], ['-1@8979.00|P/L: 7.84P', 2696, 614, 200, T],
 ['1@8970.50', 2666, 923, 102, GR], ['1@8970.50', 2666, 955, 102, GR], ['1@8970.75', 2770, 905, 102, GR], ['1@8970.75', 2770, 937, 102, GR]
].forEach(([s, x, y, w, c]) => {
    rect(x, y, w, 28, c);
    text(s, x + 2, y + 16, w - 3, '#000', 19);
});
text('S2', 2878, 959, 20, '#008000');
text('8983.50', 1, 671.5, 64, '#ffe8a8');

// ---- volume profile, "row top:left edge"
const profile = {
    e: '775:996 782:984 790:967 797:961 804:927 811:919 817:923 824:916 831:889 838:891 851:876 858:846 865:829 871:809 878:759 885:767 892:789 898:751 905:737 912:721 919:687 927:704 934:706 941:717 948:734 954:719 961:687 968:616 974:534 981:555 988:559 995:544 1001:527 1008:500 1015:495 1021:502 1028:507 1035:497 1042:495 1048:530 1055:505 1062:480 1070:494 1077:419 1084:452 1091:465 1098:520 1104:530 1111:587 1118:558 1124:552 1131:575 1138:604 1145:606 1151:656 1158:667 1165:612 1172:617 1178:607 1185:539 1192:527 1200:550 1207:611 1214:572 1221:612 1228:679 1234:707 1241:721 1254:736 1261:776 1268:796 1275:752 1281:727 1288:746 1295:731 1301:697 1308:702 1315:734 1322:719 1328:757 1335:761 1344:682 1351:656 1364:654 1371:674 1378:682 1384:749 1391:739 1404:755 1411:779 1418:809 1425:811 1432:806 1438:814 1445:821 1452:799 1459:784 1465:764 1472:754 1480:737 1487:727 1494:662 1501:607 1508:622 1514:642',
    f: '0:652 5:677 11:639 17:594 23:592 30:621 36:600 42:544 48:500 55:510 61:529 67:507 74:492 81:457 88:412 94:392 101:357 108:457 115:455 121:464 127:427 134:424 141:432 147:404 153:410 159:425 165:450 172:395 178:314 185:340 191:320 197:309 203:234 210:244 216:300 225:309 231:340 238:364 244:402 256:374 262:407 268:412 275:427 282:464 289:435 295:404 301:334 307:340 313:302 320:242 326:230 339:250 345:329 353:284 361:282 367:304 373:399 379:390 386:387 392:392 398:414 404:449 410:429 417:479 424:572 430:527 436:502 443:532 450:530 456:482 462:467 468:449 475:444 482:430 489:424 496:440 502:479 508:514 515:530 521:485 528:490 534:505 540:485 546:437 559:422 566:467 572:472 579:489 585:474 597:484 604:495 611:507 618:520 625:617 631:647 638:672 645:692 651:676 657:697 663:694 670:719 676:716 683:701 690:691 696:709 701:737 708:739 714:684 720:661 727:706 733:684 740:639 747:649 754:664 761:687 767:699 773:721 780:699 786:697 792:686 799:709 805:739 811:747 818:762 824:756 830:766 837:782 843:774 850:784 856:779 862:777 869:779 884:819 890:817 896:842 903:856 909:842 915:847 922:886 928:906 934:922 941:936 947:947 953:962 965:960 978:970 984:968 1008:965 1015:957 1019:966 1025:976 1031:985 1038:993 1045:990 1051:981 1058:978 1064:972 1070:963 1083:970 1089:974 1102:971 1115:962 1121:957 1128:951 1140:955 1152:960 1160:954 1168:946 1174:952 1193:957 1200:954 1207:942 1213:951 1218:960 1224:967 1231:977 1249:982 1262:984 1278:980 1284:983 1290:977 1297:959 1303:954 1311:949 1323:944 1330:934 1336:938 1342:940 1350:946 1355:940 1362:936 1368:939 1374:934 1385:947 1398:949 1405:952 1412:962 1419:964 1431:975 1456:977 1463:991 1470:995 1476:999 1489:1002 1496:1005'
};
let d = `M3503 ${Y('e', 775).toFixed(1)}`;
for (const v in profile) {
    profile[v].split(' ').forEach(p => {
        const [y, x] = p.split(':').map(Number);
        d += `V${Y(v, y).toFixed(1)}H${X(v, x).toFixed(1)}`;
    });
}
out += `<path class="profile" d="${d}H3503z"/>`;
rect(3022, 837, 481, 3, '#a000a0');
out += '<rect class="shade" x="2924" y="124" width="456.500" height="1292"/>';
out += '<rect class="shade" x="3549" y="126" width="6" height="1290"/>';
text('843 - 46.7%', 3459, 1136, 97, '#00ff00');

// ---- depth history strip
const mark = (y, w, c) => rect(3556 - w, y.toFixed(1), w, 2, c);
[316, 479, 519, 553, 642, 669, 759, 772, 793, 799, 806, 820, 839, 983, 998, 1012, 1046, 1169, 1189].forEach(y => mark(y / 2.24 - 1, 4, '#ffb0b0'));
for (let y = 540; y < 687; y += 3.05) {
    const k = Math.max(0, Math.round(150 - (y - 540) * 1.2));
    mark(y, y > 636 && y < 672 ? 6 : 4, `rgb(255,${k},${k})`);
}
mark(637, 42, '#ff3030');
for (let y = 689; y < 934; y += 3.05) {
    const k = Math.max(0, Math.round((y - 689) * 1));
    mark(y, y > 714 && y < 730 ? 6 : 4, `rgb(${k},255,${k})`);
}
mark(704, 11, '#20ff20');
mark(728, 24, '#20ff20');
[939, 943, 946, 958, 961, 964, 967, 970, 973, 981, 993, 1006].forEach(y => mark(y, 4, '#fff'));
mark(1115, 6, '#fff');

// ---- price axis
out += '<path d="M3561.500 99V2104" stroke="#fff"/>';
for (let p = 9028; p >= 8924; p -= 4) {
    const y = 143 + (9028 - p) * 12.186;
    hline((y - 2).toFixed(1), 3561, 3564, '#fff');
    text(p + '.00', 3582, y, 64, '#fff', 18);
}
rect(3566, 1417, 200, 16, '#000');
[['8988.13', 614, '#008000'], ['8983.50', 671, '#ff8040'], ['8976.53', 755, '#ffff00'], ['8970.75', 826, '#ff00ff'], ['8959.94', 958, '#008000'], ['8947.25', 1113, '#80ffff']].forEach(([s, y, c]) => {
    rect(3581, y, 66, 25, c);
    text(s, 3582, y + 14, 64, '#000', 18);
});
rect(3581, 639, 66, 4, '#80c0ff');

// ---- buy / sell columns
text('Buy', 3694, 119, 28, '#80ff80');
text('Sell', 3783, 119, 27, '#ff8080');
[[3662.5, '#00b000'], [3756.5, '#00b000'], [3757.5, '#c00000'], [3838.5, '#800000']].forEach(([x, c]) => {
    out += `<path d="M${x} 99V1416" stroke="${c}"/>`;
});
const digit = (s, y, c) => text(s, c === '#00b000' ? 3763 : 3750, y, 0, c, 17, c === '#00b000' ? '' : 'text-anchor="end"');
[['5', 142], ['3', 215], ['11', 232], ['2', 248], ['2', 287], ['13', 300], ['10', 339], ['6', 347], ['8', 353], ['8', 359], ['9', 364], ['3', 376], ['3', 438], ['4', 445], ['5', 455], ['2', 468], ['2', 522], ['2', 532]].forEach(p => digit(...p, '#00b000'));
'5 3 7 5 4 8 2 7 4 6 3 9 4 8 5 6 11 10 8 6 8 3 9 10 128 18 8 6 9 5 6 8 9 18 16 9 6 5 2'.split(' ').forEach((s, n) => digit(s, 541 + n * 3.95, '#00b000'));
'2 8 9 15 13 12 8 121 142 16 9 6 13 8 7 5 4 8 9 12 8 6 3 9 5 8 6 3 8 9 5 6 9 8 5 6 3 4 5 20 3 8 5 16 5 7 4 6 11 24 9 8 6 3 5 6 8 3 5 7 3 16 8 5 2'.split(' ').forEach((s, n) => digit(s, 688 + n * 4.4, '#e00000'));
[['2', 995], ['6', 1008], ['33', 1117]].forEach(p => digit(...p, '#e00000'));
text('843', 3750, 1145, 0, '#fff', 18, 'text-anchor="end"');
text('47%', 3750, 1173, 0, '#fff', 18, 'text-anchor="end"');

// ---- chart header
rect(4, 99, 150, 25, '#808080');
rect(4, 124, 105, 25, '#808080');
rect(554, 99, 86, 25, '#fff');
rect(643, 99, 85, 25, '#f00');
rect(730, 99, 117, 25, '#f00');
[['Trade: 2@8946.50', 4, 144, '#fff'], ['V: 60 NoLink MNQH0-CME  512 Trades  #11 T: 50', 155, 395, '#fff'], ['C: 8983.50', 555, 84, '#000'], ['Chg: -1.50', 644, 82, '#000'], ['DChg: -153.75', 731, 115, '#000'],
 ['15:17:20 H: 8985.00 L: 8982.75 O: 8984.00 DV: 368866 Symbol Display   (1, 90, No, No, No)  JB', 853, 751, '#fff'],
 ['Trailing Stop - Long: 8970.55', 1614, 230, '#008000'], ['Profit Target - Long: 8994.39', 1854, 229, '#ff8000'], ['Trailing Stop - Short: 8983.25', 2092, 234, '#c80000'], ['Profit Target - Short: 8961.08', 2335, 231, '#ff8000'], ['Bullish/Bearish Bar Coloring: 1.00', 2576, 259, '#00a428']
].forEach(([s, x, w, c]) => text(s, x, 112.5, w, c));
text('NPL: 146.20P', 5, 137.5, 103, '#fff');
text('3:17:42 pm', 25, 185, 250, '#0080ff', 47, 'font-weight="700"');
rect(23, 202, 260, 40, '#000');
rect(23, 202, 78, 41, '#008000');
rect(166, 202, 78, 41, '#e0ffc0');
rect(23, 253, 256, 54, '#ff8000');
text('47.24', 24, 225, 76, '#000', 28, 'font-weight="700"');
text('58.20', 168, 225, 75, '#000', 28, 'font-weight="700"');
text('MNQH0-CME', 26, 281.5, 251, '#000', 38, 'font-weight="700"');

// ---- oscillator panel
const delta = points({
    g: '0,243 8,280 17,313 25,290 42,190 50,157 60,175 75,205 83,228 97,228 108,250 118,248 133,282 142,290 150,270 158,222 175,215 192,202 208,238 225,232 242,258 260,252 283,262 292,300 301,342 312,310 326,265 345,262 358,280 367,292 383,297 392,325 400,370 410,412 427,414 435,380 443,325 452,322 460,345 470,380 485,445 492,456 502,425 518,395 526,380 535,347 545,360 552,385 569,412 577,400 594,420 603,403 612,370 622,310 627,270 635,215 643,186 652,225 660,255 668,285 677,315 685,360 694,384 702,375 712,325 720,290 727,255 735,233 744,265 752,310 762,360 777,372 795,391 803,383 812,345 828,300 836,240 845,150 853,103 862,110 870,120 878,150 886,175 895,175 903,155 912,122 920,120 928,125 937,150 945,185 953,215 962,240 970,270 980,293 987,305 995,340 1003,362 1011,362 1020,340 1030,342 1037,350 1045,340 1054,310 1062,283 1070,300 1078,330 1087,375 1095,415 1104,437 1112,425 1137,415 1155,435 1163,425 1177,400 1190,412 1210,420 1235,418 1245,385 1255,340 1270,295 1287,262 1295,225 1304,197 1320,195 1330,205 1337,240 1345,285 1362,270 1372,310 1380,345 1388,362 1397,362 1405,333 1413,338 1430,372 1445,373 1463,385 1472,345 1480,300 1488,270 1496,254 1513,265',
    h: '0,265 8,272 15,297 22,285 32,225 40,195 55,178 65,200 75,265 82,293 90,280 98,210 107,145 115,125 123,143 132,143 140,117 148,117 157,145 165,175 174,203 182,212 192,197 205,197 215,215 224,243 233,272 242,271 265,253 278,272 292,257 310,285 322,300 333,350 341,343 350,300 365,235 375,205 390,191 400,195 408,213 433,210 442,235 450,260 466,257 482,246 492,255 507,295 515,320 540,327 550,325 565,305 575,306 585,315 600,340 615,312 633,312 650,291 667,293 680,325 700,375 716,415 725,412 735,375 750,348 765,380 783,445 793,445 805,420 820,350 832,290 842,235 852,207 860,228 875,280 893,283 902,250 933,243 945,275 955,320 967,355 985,380 1000,425 1020,415 1030,430 1043,487 1051,490 1060,455 1075,380 1090,325 1093,285 1110,262 1125,215 1135,187 1143,203 1152,260 1160,303 1170,290 1178,230 1190,165 1195,151 1202,153 1220,205 1235,230 1245,290 1255,297 1268,297 1275,325 1290,395 1302,465 1310,490 1318,507 1327,508 1340,470 1355,457 1370,455 1380,435 1393,370 1410,340 1430,308 1445,290 1455,268 1462,270 1475,300 1487,330 1495,320 1505,290 1512,250 1519,227'
});

function at(pts, x) {
    let i = 1;
    while (i < pts.length - 1 && pts[i][0] < x) i++;
    const [p, q] = [pts[i - 1], pts[i]];
    const t = Math.min(1, Math.max(0, (x - p[0]) / (q[0] - p[0])));
    return p[1] + (q[1] - p[1]) * t;
}
// weighted average of the current and previous bars
function smooth(pts, weights) {
    const res = [];
    for (let x = Math.max(7.5, pts[0][0]); x <= pts[pts.length - 1][0] + 1; x += 8) {
        res.push([x, weights.reduce((s, w, i) => s + w * at(pts, x - i * 8), 0)]);
    }
    return res;
}

out += `<path class="delta" d="M0 1544L${str(delta)} 2903,1544z"/>`;
hline(1449, 8, 2905, '#a00000', 2);
hline(1639, 8, 2905, '#00a000', 2);
hline(1652, 8, 2905, '#00a000', 2);
const wtA = points({
    g: '8,328 17,330 25,327 35,305 50,285 65,262 80,250 95,238 110,228 125,222 141,222 160,205 175,185 195,160 210,148 230,133 255,119 280,107 292,107 302,117 317,115 330,107 352,95 367,98 384,97 400,110 415,135 428,155 440,160 450,158 465,175 480,195 495,225 510,250 525,268 540,280 560,310 575,328 590,352 605,370 618,377 630,365 645,342 665,336 677,334 690,355 705,368 720,365 735,352 752,353 765,372 780,395 800,415 815,420 828,413 845,375 862,335 885,300 905,260 925,220 945,185 962,164 985,163 1000,178 1020,188 1045,202 1062,198 1075,203 1090,220 1110,255 1130,292 1150,325 1170,362 1190,392 1210,425 1230,455 1245,470 1265,474 1280,465 1300,440 1325,410 1340,406 1352,410 1370,403 1385,415 1400,427 1415,428 1435,452 1450,470 1465,487 1480,487 1500,472 1513,470',
    h: '0,468 15,465 22,460 40,440 55,415 70,402 88,403 100,385 115,345 135,310 150,265 170,235 190,220 210,193 235,177 255,165 275,158 290,148 320,146 335,160 350,157 370,135 390,108 410,88'
});
const wtB = points({
    h: '697,88 710,105 725,128 755,150 775,185 800,232 818,242 833,238 852,212 870,207 892,205 915,190 935,172 958,172 970,195 990,210 1010,248 1028,272 1045,320 1060,350 1078,367 1093,368 1110,358 1125,335 1145,317 1168,315 1180,290 1195,262 1215,232 1235,224 1265,222 1280,235 1300,280 1325,350 1345,395 1365,435 1385,465 1410,485 1445,484 1462,475 1480,480 1500,487 1519,467'
});
[wtA, wtB].forEach(w => {
    line(w, 'thin', '#00a000');
    line(smooth(w, [0.25, 0.25, 0.25, 0.25]), 'thin', '#a00000');
});
line(smooth(delta, [0.55, 0.45]), 'thin', '#ffff00');
line(points({ g: '142,287 301,325' }), 'thin', '#00ff00', 1.5);
line(points({ h: '550,328 600,334' }), 'thin', '#00ff00', 1.5);
line(points({ g: '1062,294 1330,207 1568,183' }), 'thin', '#c00000', 1.5);
line(points({ h: '930,248 1140,199' }), 'thin', '#c00000', 1.5);
const dots = {
    g: '16,330r 24,328g 141,223r 292,107r 317,112g 367,97r 384,97r 450,155g 626,368g 677,334r 718,363g 727,359g 752,355r 827,414g 986,163r 1061,198g 1069,200r 1270,470g 1354,408r 1370,402r 1480,483g 1487,481g 1529,468r 1538,462g',
    h: '80,407r 88,405r 239,179r 306,149r 323,147r 348,157g 356,151g 833,236g 892,204r 958,173r 1092,363g 1160,317r 1168,315g 1251,225r 1259,223g 1268,225r 1435,483g 1443,483g 1477,477r 1502,483g 1510,475g'
};
for (const v in dots) {
    dots[v].split(' ').forEach(p => {
        const [x, y] = p.slice(0, -1).split(',').map(Number);
        out += `<circle class="dot" cx="${X(v, x).toFixed(1)}" cy="${Y(v, y).toFixed(1)}" r="3.200" fill="${p.endsWith('r') ? '#f00' : '#00a000'}" stroke="#ddd"/>`;
    });
}
[['WT', 6, 25, '#fff'], ['Delta: 20.012', 42, 104, '#b0b0ff'], ['wt1: -45.138', 156, 99, '#00a000'], ['wt2: -48.474', 265, 99, '#a00000'], ['Delta MA: 15.841', 374, 136, '#ffff00']].forEach(([s, x, w, c]) => text(s, x, 1431, w, c));

// ---- RSI and MFI panels, green while rising, red while falling
function slope(pts) {
    for (let i = 1; i < pts.length; i++) {
        out += `<path class="thin" d="M${str([pts[i - 1]])}L${str([pts[i]])}" stroke="${pts[i][1] < pts[i - 1][1] ? '#008000' : '#f00000'}"/>`;
    }
}
text('RSI: 62.37', 6, 1686, 79, '#008000');
text('MFI: 58.2', 6, 1914, 73, '#008000');
hline(1718.5, 8, 2905, '#ff8080', 1, '18 6');
hline(1853.5, 8, 2905, '#008000', 1, '18 6');
slope(points({
    g: '8,835 17,840 33,768 42,752 50,695 60,733 67,732 77,750 85,800 93,782 100,798 110,762 118,745 127,748 135,765 152,780 160,770 168,803 177,750 185,755 193,745 202,765 210,762 218,738 227,742 235,768 243,727 251,698 260,742 268,738 276,762 285,740 294,808 302,828 310,775 318,730 327,765 335,792 344,748 352,765 361,793 368,778 377,782 385,805 401,825 410,812 418,798 427,850 443,800 452,828 468,848 477,845 485,886 494,853 510,838 526,790 536,788 544,820 552,857 561,860 577,842 594,842 603,798 611,820 620,788 636,755 652,808 661,787 669,780 677,805 686,785 695,823 711,740 719,763 728,745 745,830 753,880 761,857 770,845 778,848 795,835 803,808 811,778 828,817 837,775 845,787 853,740 861,735 870,705 878,702 887,715 895,685 903,663 911,648 920,642 929,652 937,673 945,682 953,700 962,740 970,793 978,762 987,768 995,812 1003,802 1012,832 1020,818 1030,888 1037,885 1045,872 1054,820 1070,855 1079,832 1096,860 1112,827 1120,835 1129,832 1137,862 1146,855 1154,887 1162,887 1171,920 1187,917 1196,942 1205,923 1213,915 1221,945 1229,953 1238,918 1246,915 1255,880 1263,830 1271,805 1280,835 1288,793 1305,728 1313,743 1321,713 1330,748 1338,758 1347,728 1355,720 1363,748 1371,787 1388,832 1397,802 1405,825 1413,875 1422,887 1430,885 1439,905 1447,900 1455,887 1463,890 1472,860 1480,848 1497,787 1513,805',
    h: '7,835 15,820 23,753 32,742 40,757 48,712 57,715 65,730 73,802 82,802 90,775 98,760 107,732 115,750 123,730 132,692 140,710 149,720 157,720 165,753 174,738 182,715 190,658 199,648 207,705 215,740 232,777 241,740 249,780 258,790 266,790 275,787 283,757 291,740 300,795 307,785 316,820 333,818 341,790 349,753 357,775 366,757 374,752 391,717 408,738 417,655 424,660 433,628 441,645 450,630 483,632 491,640 500,710 508,765 516,745 524,753 533,775 550,790 558,735 566,727 575,765 584,820 592,843 608,820 617,755 634,750 642,728 650,763 659,742 667,757 676,802 684,820 700,822 717,830 726,848 734,822 742,817 751,842 760,878 767,880 776,918 785,920 800,877 826,757 835,750 843,730 851,778 860,772 868,775 877,757 885,735 901,665 909,720 918,707 934,727 943,775 951,797 960,855 968,847 976,827 985,820 993,852 1001,845 1010,857 1018,893 1027,870 1035,973 1043,987 1053,937 1060,932 1069,870 1077,867 1086,817 1094,797 1102,825 1110,782 1118,762 1127,765 1135,745 1144,768 1152,743 1160,743 1177,720 1185,733 1194,710 1202,745 1211,765 1219,728 1227,765 1236,790 1244,812 1252,812 1261,772 1269,787 1277,770 1286,845 1295,880 1303,915 1311,943 1328,948 1344,962 1361,962 1370,987 1378,967 1386,942 1403,937 1411,882 1436,835 1445,790 1453,787 1478,802 1487,772 1495,795 1512,742 1519,740'
}));
[{ g: '8,1243 52,1246 191,1276' }, { g: '52,1246 158,1298' }, { g: '277,1198 350,1246' }, { g: '493,1370 594,1284' }, { g: '1037,1340 1104,1335' }, { g: '1240,1445 1463,1410' }, { h: '199,1170 262,1250' }, { h: '199,1170 291,1252' }, { h: '567,1229 642,1245' }].forEach(p => line(points(p), 'thin', '#fff'));
slope(points({
    g: '8,1243 25,1283 40,1270 52,1243 67,1228 85,1262 97,1290 110,1312 120,1305 135,1300 158,1298 170,1310 185,1298 193,1275 210,1250 228,1224 235,1228 245,1215 252,1198 285,1198 295,1215 310,1248 325,1245 335,1254 350,1246 368,1263 377,1255 388,1262 398,1288 412,1300 418,1293 430,1304 455,1313 470,1338 478,1343 493,1370 512,1362 525,1330 543,1297 570,1305 590,1287 605,1263 620,1250 637,1221 645,1225 660,1252 670,1252 685,1275 695,1295 703,1295 715,1272 728,1264 738,1275 750,1307 762,1337 778,1333 795,1341 803,1330 812,1310 830,1288 846,1280 865,1250 878,1210 890,1202 903,1172 912,1140 920,1118 929,1106 937,1110 945,1125 955,1158 970,1210 985,1232 998,1272 1010,1285 1022,1298 1030,1315 1045,1355 1055,1350 1070,1327 1087,1318 1104,1334 1122,1320 1132,1333 1145,1360 1160,1373 1172,1382 1188,1407 1205,1417 1222,1424 1238,1445 1250,1430 1262,1398 1272,1367 1290,1355 1305,1317 1322,1277 1340,1250 1355,1230 1363,1230 1375,1250 1388,1293 1405,1302 1420,1338 1430,1355 1440,1382 1455,1405 1470,1413 1480,1405 1492,1378 1505,1344',
    h: '0,1345 15,1348 30,1317 42,1300 55,1255 65,1233 73,1233 98,1260 108,1250 115,1233 123,1233 135,1217 150,1205 165,1200 175,1212 185,1203 200,1167 208,1165 215,1172 225,1195 232,1220 248,1228 265,1250 283,1262 291,1250 308,1258 325,1283 333,1292 341,1285 357,1255 367,1243 383,1213 400,1180 408,1175 417,1158 425,1148 435,1123 448,1105 465,1094 483,1090 491,1100 500,1125 508,1155 517,1177 525,1182 540,1225 550,1243 558,1243 567,1228 577,1235 590,1268 600,1284 608,1280 625,1255 642,1245 650,1243 660,1228 668,1232 690,1280 708,1297 720,1315 735,1332 743,1332 752,1345 760,1370 768,1385 785,1424 800,1408 815,1365 825,1320 835,1280 843,1257 852,1242 868,1236 877,1222 890,1180 902,1142 918,1132 935,1127 943,1135 952,1157 960,1182 975,1233 985,1242 1000,1285 1010,1302 1018,1328 1028,1343 1035,1367 1043,1397 1053,1416 1060,1416 1077,1390 1086,1362 1093,1337 1102,1323 1118,1270 1128,1247 1135,1223 1148,1200 1160,1187 1185,1177 1202,1168 1211,1179 1228,1168 1236,1177 1252,1210 1261,1203 1278,1198 1287,1210 1300,1250 1313,1305 1320,1328 1335,1352 1345,1380 1362,1405 1370,1425 1380,1438 1390,1428 1402,1410 1413,1387 1420,1377 1430,1350 1445,1300 1455,1278 1470,1255 1485,1245 1512,1238 1519,1230'
}));

// ---- panel borders and scales
hline(1416.5, 0, 3561, '#fff');
hline(1671.5, 0, 3561, '#fff');
hline(1899.5, 0, 3561, '#fff');
hline(2104.5, 0, 3562, '#fff');
out += '<path d="M.500 99V2104" stroke="#fff"/>';
[['40.000', 1474, 52], ['0.000', 1545.5, 43], ['-40.000', 1617.5, 59], ['80.00', 1719.5, 43], ['60.00', 1764.5, 43], ['40.00', 1809.5, 43], ['20.00', 1854.5, 43], ['0.00', 1898.5, 33], ['80.0', 1940, 33], ['60.0', 1992.5, 33], ['40.0', 2043.5, 33], ['20.0', 2094.5, 33]].forEach(([s, y, w]) => {
    hline(y - 1.5, 3561, 3565, '#fff');
    text(s, 3567, y, w, '#fff');
});
rect(3564, 1900, 50, 12, '#000');

// ---- time axis
[['9:40:07', 95], ['9:43:48', 167], ['9:47:02', 239], ['9:51:25', 311], ['9:56:40', 383], ['10:01:50', 464], ['10:05:59', 552], ['10:11:31', 640], ['10:17:25', 728], ['10:23:37', 816], ['10:29:44', 904], ['10:36:57', 992], ['10:44:31', 1080], ['10:53:55', 1168], ['11:03:08', 1256], ['11:12', 1336], ['11:20:31', 1408], ['11:30:02', 1495], ['11:37:46', 1584], ['11:48:32', 1672], ['12:02:49', 1760], ['12:14', 1840], ['12:22:03', 1911], ['12:35:02', 1999], ['12:50:23', 2087], ['13:04:49', 2175], ['13:21:09', 2263], ['13:40:17', 2351], ['14:00:32', 2439], ['14:16:07', 2527], ['14:33:51', 2615], ['14:45', 2687], ['14:53:07', 2759], ['15:08:29', 2847], ['16:30:26', 2936], ['19:51:55', 3023], ['2:34:53', 3199], ['5:19:44', 3271], ['8:04:35', 3343], ['11:07:45', 3424], ['14:29:14', 3511]].forEach(([s, x]) => {
    const w = s.length === 8 ? 66 : s.length === 7 ? 57 : 43;
    out += `<path d="M${x + 0.5} 2104v4" stroke="#fff"/>`;
    text(s, x - w / 2, 2122, w, '#fff');
});
rect(0, 2108, 50, 25, '#fff');
text('0-1-27', -4, 2122, 52, '#000');
rect(3116, 2108, 39, 25, '#fff');
text('1-28', 3118, 2122, 35, '#000');
rect(3804, 2108, 35, 25, '#00c000');
text('7 E', 3811, 2122, 23, '#fff');
hline(2133.5, 0, 3840, '#fff');

document.getElementById('chart').innerHTML = out;
```
